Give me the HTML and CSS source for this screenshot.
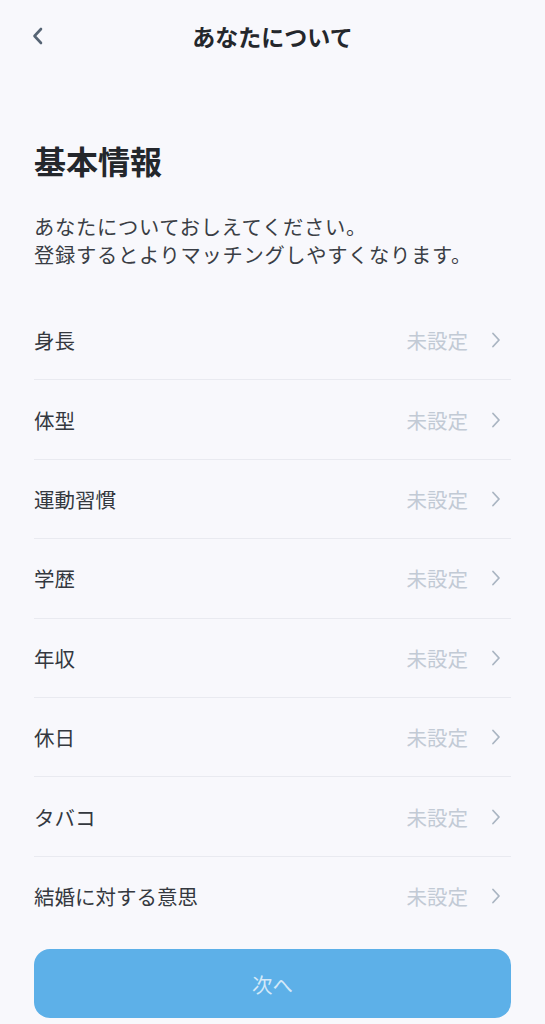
FILE: index.html
```html
<!DOCTYPE html>
<html lang="ja">
<head>
    <meta charset="UTF-8">
    <meta name="viewport" content="width=device-width, initial-scale=1.0">
    <title>あなたについて</title>
    <link rel="stylesheet" href="styles.css">
</head>
<body>

    <!-- Top navigation -->
    <header class="topbar">
        <button class="back" type="button" aria-label="戻る">
            <svg width="14" height="20" viewBox="0 0 14 20"><path d="M10 3 L3.5 10 L10 17" fill="none" stroke="#566474" stroke-width="2.6" stroke-linecap="round" stroke-linejoin="round"/></svg>
        </button>
        <div class="topbar-title">あなたについて</div>
    </header>

    <main class="content">
        <h1 class="heading">基本情報</h1>
        <p class="lead">あなたについておしえてください。<br>登録するとよりマッチングしやすくなります。</p>

        <!-- Profile items -->
        <ul class="items">
            <li class="item"><span class="item-label">身長</span><span class="item-value">未設定</span><svg class="chev" width="10" height="18" viewBox="0 0 10 18"><path d="M2 2.5 L8 9 L2 15.5" fill="none" stroke="#aab5c2" stroke-width="1.8" stroke-linecap="round" stroke-linejoin="round"/></svg></li>
            <li class="item"><span class="item-label">体型</span><span class="item-value">未設定</span><svg class="chev" width="10" height="18" viewBox="0 0 10 18"><path d="M2 2.5 L8 9 L2 15.5" fill="none" stroke="#aab5c2" stroke-width="1.8" stroke-linecap="round" stroke-linejoin="round"/></svg></li>
            <li class="item"><span class="item-label">運動習慣</span><span class="item-value">未設定</span><svg class="chev" width="10" height="18" viewBox="0 0 10 18"><path d="M2 2.5 L8 9 L2 15.5" fill="none" stroke="#aab5c2" stroke-width="1.8" stroke-linecap="round" stroke-linejoin="round"/></svg></li>
            <li class="item"><span class="item-label">学歴</span><span class="item-value">未設定</span><svg class="chev" width="10" height="18" viewBox="0 0 10 18"><path d="M2 2.5 L8 9 L2 15.5" fill="none" stroke="#aab5c2" stroke-width="1.8" stroke-linecap="round" stroke-linejoin="round"/></svg></li>
            <li class="item"><span class="item-label">年収</span><span class="item-value">未設定</span><svg class="chev" width="10" height="18" viewBox="0 0 10 18"><path d="M2 2.5 L8 9 L2 15.5" fill="none" stroke="#aab5c2" stroke-width="1.8" stroke-linecap="round" stroke-linejoin="round"/></svg></li>
            <li class="item"><span class="item-label">休日</span><span class="item-value">未設定</span><svg class="chev" width="10" height="18" viewBox="0 0 10 18"><path d="M2 2.5 L8 9 L2 15.5" fill="none" stroke="#aab5c2" stroke-width="1.8" stroke-linecap="round" stroke-linejoin="round"/></svg></li>
            <li class="item"><span class="item-label">タバコ</span><span class="item-value">未設定</span><svg class="chev" width="10" height="18" viewBox="0 0 10 18"><path d="M2 2.5 L8 9 L2 15.5" fill="none" stroke="#aab5c2" stroke-width="1.8" stroke-linecap="round" stroke-linejoin="round"/></svg></li>
            <li class="item"><span class="item-label">結婚に対する意思</span><span class="item-value">未設定</span><svg class="chev" width="10" height="18" viewBox="0 0 10 18"><path d="M2 2.5 L8 9 L2 15.5" fill="none" stroke="#aab5c2" stroke-width="1.8" stroke-linecap="round" stroke-linejoin="round"/></svg></li>
        </ul>

        <button class="next" type="button">次へ</button>
    </main>

</body>
</html>
```

FILE: styles.css
```css
/* Profile basics screen */
body {
    margin: 0;
    background-color: #f8f8fc;
    font-family: "Noto Sans CJK JP", "Noto Sans", sans-serif;
    color: #2b2f36;
}

.topbar {
    height: 72px;
    display: flex;
    align-items: center;
    justify-content: center;
    position: relative;
}

.back {
    position: absolute;
    left: 31px;
    top: 26px;
    padding: 0;
    border: none;
    background: none;
    width: 16px;
    height: 20px;
}

.back svg {
    display: block;
}

.topbar-title {
    font-size: 23px;
    font-weight: bold;
    color: #24272c;
}

.content {
    padding: 0 34px;
}

.heading {
    margin: 67px 0 0;
    font-size: 32px;
    line-height: 42px;
    font-weight: bold;
    color: #24272c;
}

.lead {
    margin: 31px 0 0;
    font-size: 20.3px;
    line-height: 28px;
    letter-spacing: 0.7px;
    color: #3a3e45;
}

.items {
    list-style: none;
    margin: 33px 0 0;
    padding: 0;
}

.item {
    height: 78.4px;
    display: flex;
    align-items: center;
    border-bottom: 1px solid #e9eaf0;
    font-size: 20.5px;
}

.item:last-child {
    border-bottom: none;
}

.item-label {
    flex: 1;
    color: #34383f;
}

.item-value {
    color: #c2cad5;
    margin-right: 23px;
}

.chev {
    margin-right: 10px;
}

.next {
    display: block;
    width: 100%;
    height: 69px;
    margin-top: 14px;
    border: none;
    border-radius: 16px;
    background-color: #5db0e8;
    color: #d4e9f8;
    font-family: inherit;
    font-size: 20.5px;
}
```
